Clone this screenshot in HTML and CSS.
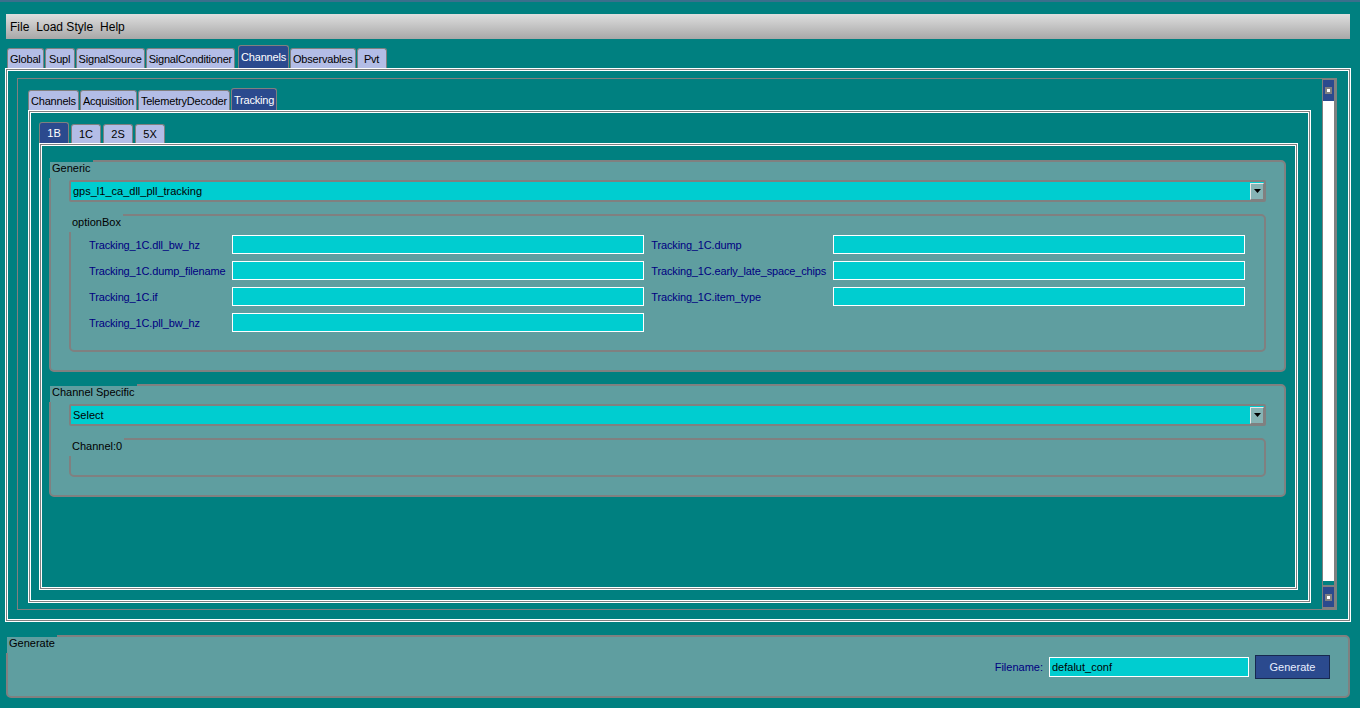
FILE: index.html
```html
<!DOCTYPE html>
<html>
<head>
<meta charset="utf-8">
<link rel="stylesheet" href="styles.css">
</head>
<body>
<div class="titlestrip"></div>
<div class="menubar">
  <span>File</span><span>Load Style</span><span>Help</span>
</div>
<div class="tabbar tabbar-outer">
  <div class="tab">Global</div>
  <div class="tab">Supl</div>
  <div class="tab">SignalSource</div>
  <div class="tab">SignalConditioner</div>
  <div class="tab current">Channels</div>
  <div class="tab">Observables</div>
  <div class="tab">Pvt</div>
</div>
<div class="pane pane-outer">
  <div class="scrollarea">
    <div class="scroll-content">
      <div class="tabbar tabbar-mid">
        <div class="tab">Channels</div>
        <div class="tab">Acquisition</div>
        <div class="tab">TelemetryDecoder</div>
        <div class="tab current">Tracking</div>
      </div>
      <div class="pane pane-mid">
        <div class="tabbar tabbar-inner">
          <div class="tab wide current">1B</div>
          <div class="tab wide">1C</div>
          <div class="tab wide">2S</div>
          <div class="tab wide">5X</div>
        </div>
        <div class="pane pane-inner">
          <div class="group group-main">
            <div class="group-title">Generic</div>
            <div class="combo"><span>gps_l1_ca_dll_pll_tracking</span><span class="combo-arrow"><svg width="7" height="4" viewBox="0 0 7 4"><path d="M0 0H7L3.5 4Z" fill="#000"/></svg></span></div>
            <div class="group group-sub options">
              <div class="group-title">optionBox</div>
              <div class="option-grid">
                <span class="opt-label">Tracking_1C.dll_bw_hz</span><span class="field"></span>
                <span class="opt-label">Tracking_1C.dump</span><span class="field"></span>
                <span class="opt-label">Tracking_1C.dump_filename</span><span class="field"></span>
                <span class="opt-label">Tracking_1C.early_late_space_chips</span><span class="field"></span>
                <span class="opt-label">Tracking_1C.if</span><span class="field"></span>
                <span class="opt-label">Tracking_1C.item_type</span><span class="field"></span>
                <span class="opt-label">Tracking_1C.pll_bw_hz</span><span class="field"></span>
              </div>
            </div>
          </div>
          <div class="group group-main">
            <div class="group-title">Channel Specific</div>
            <div class="combo"><span>Select</span><span class="combo-arrow"><svg width="7" height="4" viewBox="0 0 7 4"><path d="M0 0H7L3.5 4Z" fill="#000"/></svg></span></div>
            <div class="group group-sub channel">
              <div class="group-title">Channel:0</div>
            </div>
          </div>
        </div>
      </div>
    </div>
    <div class="vscroll">
      <div class="sb-btn"><span class="knob"></span></div>
      <div class="sb-track"></div>
      <div class="sb-gap"></div>
      <div class="sb-btn sb-down"><span class="knob"></span></div>
    </div>
  </div>
</div>
<div class="group generate">
  <div class="group-title">Generate</div>
  <span class="fname-label">Filename:</span>
  <span class="fname-field">defalut_conf</span>
  <span class="gen-btn">Generate</span>
</div>
</body>
</html>
```
FILE: styles.css
```css
* { box-sizing: border-box; }
html, body { margin: 0; padding: 0; }
body {
  height: 708px;
  overflow: hidden;
  background: #008080;
  font-family: "Liberation Sans", Arial, sans-serif;
  font-size: 11px;
  color: #000;
  display: flex;
  flex-direction: column;
}
.titlestrip { flex: none; height: 2px; background: #3b6f8c; }
.menubar {
  flex: none;
  margin: 12px 10px 0 6px;
  height: 25px;
  background: linear-gradient(#dedede, #a8a8a8);
  display: flex;
  align-items: center;
  gap: 7px;
  padding-left: 4px;
  font-size: 12px;
}
.tabbar { flex: none; display: flex; align-items: flex-end; }
.tabbar-outer { margin: 6px 0 0 7px; height: 23px; }
.tabbar-mid { height: 22px; }
.tabbar-inner { height: 21px; }
.tab {
  height: 20px;
  min-width: 30px;
  padding: 0 2px;
  margin-right: 1px;
  background: #b3bde6;
  border: 1px solid #808080;
  border-bottom: none;
  border-radius: 3px 3px 0 0;
  display: flex;
  align-items: center;
  justify-content: center;
  white-space: nowrap;
  letter-spacing: -0.2px;
}
.tab.wide { width: 30px; margin-right: 2px; letter-spacing: 0; }
.tabbar-inner .tab { height: 19px; }
.tab.current { background: #2b4a8e; color: #fff; }
.tabbar-outer .tab.current { height: 23px; margin-left: 2px; }
.tabbar-mid .tab.current { height: 22px; }
.tabbar-inner .tab.current { height: 21px; }

.pane {
  border: 1px solid #fff;
  box-shadow: inset 0 0 0 1px #808080, inset 0 0 0 2px #fff;
}
.pane-outer {
  flex: 1;
  min-height: 0;
  margin: 0 9px 0 5px;
  padding: 9px 13px 11px 11px;
  display: flex;
}
.scrollarea {
  flex: 1;
  display: flex;
  border: 1px solid #808080;
}
.scroll-content {
  flex: 1;
  display: flex;
  flex-direction: column;
  padding: 9px 11px 6px 10px;
}
.pane-mid {
  flex: 1;
  display: flex;
  flex-direction: column;
  padding: 11px 12px 12px 10px;
}
.pane-inner {
  flex: 1;
  display: flex;
  flex-direction: column;
  gap: 12px;
  padding: 16px 11px 10px 9px;
}
.vscroll {
  flex: none;
  width: 14px;
  background: #808080;
  padding: 1px 2px 2px 1px;
  display: flex;
  flex-direction: column;
}
.sb-btn {
  flex: none;
  height: 21px;
  background: #2b4a8e;
  display: flex;
  align-items: center;
  justify-content: center;
}
.sb-down { height: 20px; }
.knob {
  width: 7px;
  height: 7px;
  border: 2px solid #808080;
  background: #fff;
}
.sb-track { flex: 1; background: #fff; }
.sb-gap { flex: none; height: 4px; background: #008080; margin-bottom: 2px; }

.group {
  --outer: #008080;
  position: relative;
  background: #5f9ea0;
  border: 2px solid #808080;
  border-radius: 5px;
}
.group-sub { --outer: #5f9ea0; }
.group-title {
  position: absolute;
  top: -2px;
  left: -2px;
  height: 18px;
  border-top: 2px solid var(--outer);
  border-left: 1px solid var(--outer);
  background: #5f9ea0;
  padding: 0 2px 0 2px;
  line-height: 12px;
  white-space: nowrap;
}
.group-main {
  flex: none;
  padding: 18px;
  display: flex;
  flex-direction: column;
  gap: 12px;
}
.combo {
  flex: none;
  height: 22px;
  border: 2px solid #808080;
  border-radius: 2px;
  background: #00cdd0;
  display: flex;
  align-items: center;
  padding-left: 2px;
}
.combo-arrow {
  margin-left: auto;
  width: 14px;
  height: 17px;
  border: 1px solid;
  border-color: #e8e8e8 #808080 #808080 #e8e8e8;
  background: #86b4b5;
  display: flex;
  align-items: center;
  justify-content: center;
}
.options { padding: 19px 19px 18px 18px; }
.option-grid {
  display: grid;
  grid-template-columns: auto 1fr auto 1fr;
  column-gap: 7px;
  row-gap: 7px;
  align-items: center;
}
.opt-label { color: #000080; white-space: nowrap; letter-spacing: -0.15px; }
.field {
  height: 19px;
  border: 1px solid #fff;
  background: #00cdd0;
}
.channel { flex: none; height: 39px; }

.generate {
  flex: none;
  margin: 13px 10px 10px 6px;
  height: 63px;
  display: flex;
  align-items: center;
  justify-content: flex-end;
  gap: 6px;
  padding-right: 18px;
}
.fname-label { color: #000080; }
.fname-field {
  width: 200px;
  height: 20px;
  border: 1px solid #fff;
  background: #00cdd0;
  padding-left: 2px;
  line-height: 18px;
}
.gen-btn {
  width: 75px;
  height: 24px;
  background: #2b4a8e;
  border: 1px solid #17284f;
  color: #e8eeff;
  display: flex;
  align-items: center;
  justify-content: center;
}
```
